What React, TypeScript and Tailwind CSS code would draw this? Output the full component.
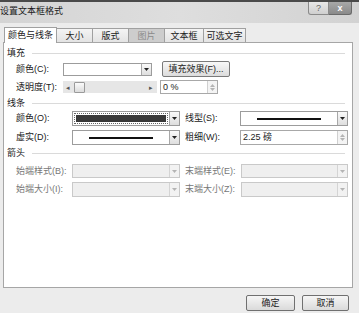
import React from 'react';

const font = "font-['Liberation_Sans','Noto_Sans_CJK_SC',sans-serif]";

function Tri({ disabled = false, up = false }: { disabled?: boolean; up?: boolean }) {
  return (
    <svg width="5" height="3" viewBox="0 0 5 3">
      <path d={up ? 'M0 3h5L2.5 0z' : 'M0 0h5L2.5 3z'} fill={disabled ? '#b4b4b4' : '#222'} />
    </svg>
  );
}

function DropBtn({ disabled = false }: { disabled?: boolean }) {
  return (
    <div
      className={`w-[10px] h-full flex items-center justify-center border-l ${
        disabled ? 'border-[#d4d4d4] bg-[#f2f2f2]' : 'border-[#a8a8a8] bg-linear-to-b from-[#fafafa] to-[#dedede]'
      }`}
    >
      <Tri disabled={disabled} />
    </div>
  );
}

function SpinBtn() {
  return (
    <div className="w-[10px] h-full flex flex-col items-center justify-center gap-px border-l border-[#d0d0d0] bg-[#f4f4f4]">
      <Tri up disabled />
      <Tri disabled />
    </div>
  );
}

function Combo({
  className,
  disabled = false,
  children,
}: {
  className: string;
  disabled?: boolean;
  children?: React.ReactNode;
}) {
  return (
    <div
      className={`${className} flex border ${
        disabled ? 'border-[#c9c9c9] bg-[#efefef]' : 'border-[#9c9c9c] bg-white'
      }`}
    >
      <div className="flex-1 flex">{children}</div>
      <DropBtn disabled={disabled} />
    </div>
  );
}

function Spinner({ className, value }: { className: string; value: string }) {
  return (
    <div className={`${className} flex border border-[#a8a8a8] bg-white`}>
      <div className="flex-1 flex items-center pl-[2px]">{value}</div>
      <SpinBtn />
    </div>
  );
}

function LineSample() {
  return (
    <div className="flex-1 flex items-center justify-center">
      <div className="w-[64px] h-[2px] bg-[#111]" />
    </div>
  );
}

function Section({ title, className = '' }: { title: string; className?: string }) {
  return (
    <div className={`${className} h-[12px] flex items-center pl-[3px] pr-[7px] gap-[7px]`}>
      <span>{title}</span>
      <div className="flex-1 h-px bg-[#dadada]" />
    </div>
  );
}

function Tab({ label, active = false, disabled = false }: { label: string; active?: boolean; disabled?: boolean }) {
  if (active) {
    return (
      <div className="relative z-10 w-[53px] h-[16px] border border-b-0 border-[#a0a0a0] bg-white flex items-center justify-center">
        {label}
      </div>
    );
  }
  return (
    <div
      className={`h-[15px] -ml-px border border-b-0 border-[#a0a0a0] flex items-center justify-center ${
        disabled ? 'bg-[#cdcdcd] text-[#8a8a8a]' : 'bg-linear-to-b from-[#f4f4f4] to-[#e2e2e2]'
      } ${label.length > 3 ? 'w-[43px]' : label.length === 3 ? 'w-[40px]' : 'w-[37px]'}`}
    >
      {label}
    </div>
  );
}

export default function App() {
  return (
    <div className={`w-[359px] h-[313px] bg-[#ececec] overflow-hidden text-[9px] leading-none text-[#222] ${font}`}>
      {/* title bar */}
      <div className="h-[23px] border-t-2 border-[#4a4a4a] bg-linear-to-r from-[#d4d4d4] via-[#dedede] to-[#d2d2d2] flex">
        <span className="self-center -mt-[3px] text-[#1a1a1a]">设置文本框格式</span>
        <div className="ml-auto mr-[7px] flex h-[13px]">
          <div className="w-[21px] border border-t-0 border-[#8a8a8a] rounded-bl-[3px] bg-linear-to-b from-[#e8e8e8] to-[#cfcfcf] flex items-center justify-center text-[#666]">
            ?
          </div>
          <div className="w-[23px] border border-t-0 border-l-0 border-[#6a6a6a] rounded-br-[3px] bg-linear-to-b from-[#a8a8a8] to-[#8a8a8a] flex items-center justify-center text-white font-bold">
            x
          </div>
        </div>
      </div>

      {/* tabs */}
      <div className="mt-[4px] pl-[4px] h-[16px] flex items-end">
        <Tab label="颜色与线条" active />
        <Tab label="大小" />
        <Tab label="版式" />
        <Tab label="图片" disabled />
        <Tab label="文本框" />
        <Tab label="可选文字" />
      </div>

      {/* panel */}
      <div className="relative ml-[3px] -mt-px w-[350px] h-[246px] border border-[#a6a6a6] bg-white">
        <Section title="填充" className="mt-[4px]" />
        <div className="mt-[2px] h-[16px] flex items-center pl-[12px]">
          <span className="w-[47px]">颜色(C):</span>
          <Combo className="w-[89px] h-[13px]" />
          <div className="ml-[10px] w-[68px] h-[16px] border border-[#7a7a7a] rounded-[2px] bg-linear-to-b from-[#f8f8f8] to-[#dcdcdc] flex items-center justify-center">
            填充效果(F)...
          </div>
        </div>
        <div className="mt-[3px] h-[14px] flex items-center pl-[12px]">
          <span className="w-[47px]">透明度(T):</span>
          <div className="w-[94px] h-[12px] bg-[#e6e6e6] flex items-center">
            <span className="ml-[3px] text-[7px] text-[#555]">◂</span>
            <div className="ml-[4px] w-[11px] h-[11px] border border-[#9a9a9a] rounded-[1px] bg-linear-to-b from-[#fbfbfb] to-[#dcdcdc]" />
            <span className="ml-auto mr-[4px] text-[7px] text-[#555]">▸</span>
          </div>
          <Spinner className="ml-[3px] w-[58px] h-[14px]" value="0 %" />
        </div>

        <Section title="线条" className="mt-[3px]" />
        <div className="mt-[2px] h-[15px] flex items-center pl-[12px]">
          <span className="w-[56px]">颜色(O):</span>
          <Combo className="w-[108px] h-[15px]">
            <div className="flex-1 m-px border border-dotted border-[#666] p-px flex">
              <div className="flex-1 bg-[#3a3a3a]" />
            </div>
          </Combo>
          <span className="ml-[5px] w-[55px]">线型(S):</span>
          <Combo className="w-[108px] h-[15px]">
            <LineSample />
          </Combo>
        </div>
        <div className="mt-[4px] h-[15px] flex items-center pl-[12px]">
          <span className="w-[56px]">虚实(D):</span>
          <Combo className="w-[108px] h-[15px]">
            <LineSample />
          </Combo>
          <span className="ml-[5px] w-[55px]">粗细(W):</span>
          <Spinner className="w-[108px] h-[15px]" value="2.25 磅" />
        </div>

        <Section title="箭头" className="mt-[2px]" />
        <div className="mt-[5px] h-[14px] flex items-center pl-[12px] text-[#777]">
          <span className="w-[56px]">始端样式(B):</span>
          <Combo className="w-[108px] h-[14px]" disabled />
          <span className="ml-[5px] w-[56px]">末端样式(E):</span>
          <Combo className="w-[107px] h-[14px]" disabled />
        </div>
        <div className="mt-[4px] h-[15px] flex items-center pl-[12px] text-[#777]">
          <span className="w-[56px]">始端大小(I):</span>
          <Combo className="w-[108px] h-[15px]" disabled />
          <span className="ml-[5px] w-[56px]">末端大小(Z):</span>
          <Combo className="w-[107px] h-[15px]" disabled />
        </div>
      </div>

      {/* buttons */}
      <div className="mt-[7px] pr-[10px] flex justify-end gap-[7px]">
        <div className="w-[49px] h-[16px] border border-[#707070] rounded-[2px] bg-linear-to-b from-[#f6f6f6] to-[#dadada] flex items-center justify-center">
          确定
        </div>
        <div className="w-[47px] h-[16px] border border-[#707070] rounded-[2px] bg-linear-to-b from-[#f6f6f6] to-[#dadada] flex items-center justify-center">
          取消
        </div>
      </div>
    </div>
  );
}
